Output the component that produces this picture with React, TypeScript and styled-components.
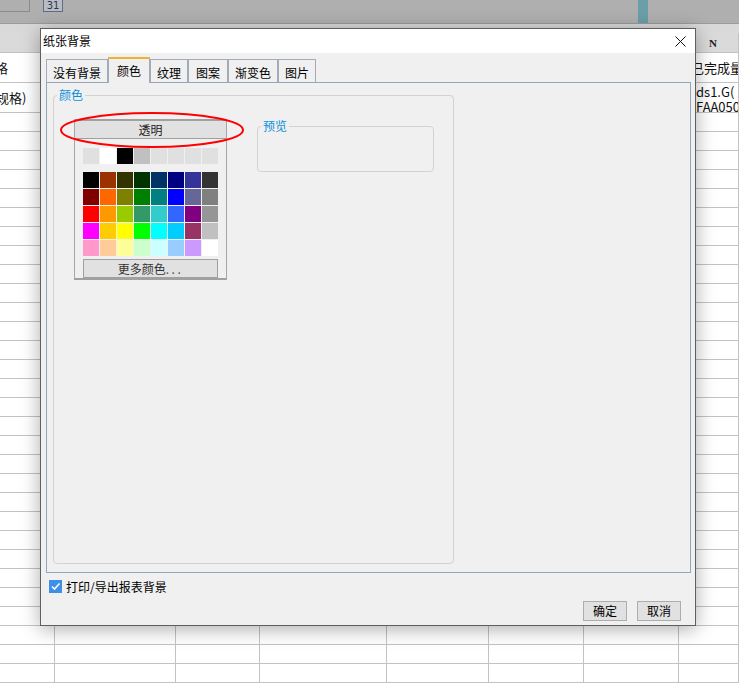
import React from "react";
import styled, { createGlobalStyle } from "styled-components";

const GlobalStyle = createGlobalStyle`
  html, body { margin: 0; padding: 0; background: #fff; overflow: hidden; }
  body { font-family: "Noto Sans CJK SC", "Noto Sans", sans-serif; }
  * { box-sizing: border-box; }
`;

const CJK = `"Noto Sans CJK SC", "Noto Sans", sans-serif`;

const Screen = styled.div`
  position: relative;
  width: 739px;
  height: 684px;
  overflow: hidden;
  background: #fff;
`;

/* ---------- background spreadsheet ---------- */
const Toolbar = styled.div`
  height: 24px;
  background: #afafaf;
  border-bottom: 1px solid #9b9b9b;
  display: flex;
  align-items: flex-start;
`;

const InputStub = styled.div`
  width: 30px;
  height: 12px;
  border-right: 1px solid #8c8c8c;
  border-bottom: 1px solid #8c8c8c;
`;

const DateButton = styled.div`
  margin-left: 13px;
  width: 20px;
  height: 12px;
  border: 1px solid #5c6d88;
  border-top: none;
  background: #b9bcc3;
  font: 10px/11px "DejaVu Sans", sans-serif;
  color: #2b3550;
  text-align: center;
`;

const Spacer = styled.div`
  flex: 1;
`;

const TealBar = styled.div`
  width: 10px;
  height: 23px;
  margin-right: 91px;
  background: #6a9ea9;
`;

const Band = styled.div`
  height: 9px;
  background: #d9d9d9;
`;

const Sheet = styled.div`
  display: grid;
  grid-template-columns: 55px 121px 84px 127px 102px 95px 95px 1fr;
`;

const Cell = styled.div<{ $h: number; $head?: boolean }>`
  height: ${(p) => p.$h}px;
  border-right: 1px solid #c3c3c3;
  border-bottom: 1px solid #c3c3c3;
  background: ${(p) => (p.$head ? "#dadada" : "#fff")};
  font: 13px/15px ${CJK};
  color: #111;
  overflow: hidden;
  white-space: nowrap;
  display: flex;
  flex-direction: column;
  justify-content: center;
`;

const ClipText = styled.span<{ $shift: number }>`
  margin-left: ${(p) => p.$shift}px;
`;

const HeadLetter = styled.span`
  font: bold 11px "Liberation Serif", serif;
  padding-left: 30px;
  color: #222;
`;

const TwoLine = styled.div`
  padding: 1px 0 0 17px;
  font: 13px/15px ${CJK};
  align-self: stretch;
  margin-top: auto;
  height: 29px;
  overflow: hidden;
`;

/* ---------- dialog ---------- */
const Dialog = styled.div`
  position: absolute;
  left: 40px;
  top: 28px;
  width: 656px;
  height: 598px;
  border: 1px solid #5f5f5f;
  background: #f0f0f0;
  box-shadow: 0 3px 18px rgba(0, 0, 0, 0.33);
  display: flex;
  flex-direction: column;
`;

const TitleBar = styled.div`
  height: 24px;
  background: #fff;
  display: flex;
  align-items: center;
  justify-content: space-between;
  padding: 0 9px 0 2px;
  font: 12px/14px ${CJK};
  color: #000;
`;

const Body = styled.div`
  flex: 1;
  padding: 6px 5px 0 5px;
  display: flex;
  flex-direction: column;
`;

const TabRow = styled.div`
  display: flex;
  height: 24px;
  position: relative;
  z-index: 2;
`;

const Tab = styled.div<{ $w: number; $active?: boolean }>`
  width: ${(p) => p.$w}px;
  height: ${(p) => (p.$active ? 26 : 24)}px;
  margin-top: ${(p) => (p.$active ? -2 : 0)}px;
  border: 1px solid #a3abb9;
  border-bottom: ${(p) => (p.$active ? "none" : "1px solid #98a4bb")};
  border-top: ${(p) => (p.$active ? "2px solid #f0b233" : "1px solid #a3abb9")};
  background: #f0f0f0;
  font: 12px/14px ${CJK};
  color: #000;
  display: flex;
  justify-content: center;
  align-items: center;
  padding-top: ${(p) => (p.$active ? 0 : 3)}px;
`;

const Panel = styled.div`
  margin-top: -1px;
  height: 491px;
  width: 645px;
  border: 1px solid #98a4bb;
  background: #f0f0f0;
  padding: 6px 0 0 6px;
`;

const Group = styled.fieldset<{ $w: number; $h: number }>`
  margin: 0;
  padding: 0;
  width: ${(p) => p.$w}px;
  height: ${(p) => p.$h}px;
  border: 1px solid #d2d2d2;
  border-radius: 4px;
`;

const Legend = styled.legend`
  margin-left: 3px;
  padding: 0 2px;
  font: 12px/12px ${CJK};
  color: #0c8fd9;
`;

const GroupContent = styled.div`
  display: flex;
  align-items: flex-start;
  gap: 30px;
  padding: 18px 0 0 20px;
`;

const PopupWrap = styled.div`
  position: relative;
  width: 153px;
`;

const Popup = styled.div`
  width: 153px;
  border-left: 1px solid #a6a6a6;
  border-right: 1px solid #a6a6a6;
  border-bottom: 2px solid #a0a0a0;
  display: flex;
  flex-direction: column;
`;

const ClearButton = styled.div`
  height: 20px;
  border-top: 2px solid #a0a0a0;
  border-bottom: 1px solid #a0a0a0;
  background: #e1e1e1;
  font: 12px/17px ${CJK};
  color: #222;
  text-align: center;
`;

const SwatchArea = styled.div`
  padding: 9px 0 0 8px;
  display: flex;
  flex-direction: column;
`;

const SwatchGrid = styled.div<{ $mt: number }>`
  margin-top: ${(p) => p.$mt}px;
  display: grid;
  grid-template-columns: repeat(8, 16px);
  grid-auto-rows: 16px;
  gap: 1px;
`;

const Swatch = styled.div<{ $c: string }>`
  background: ${(p) => p.$c};
`;

const MoreButton = styled.div`
  margin-top: 3px;
  width: 135px;
  height: 19px;
  border: 1px solid #a0a0a0;
  background: #e1e1e1;
  font: 12px/17px ${CJK};
  color: #333;
  text-align: center;
`;

const Dots = styled.span`
  letter-spacing: 2.5px;
  color: #555;
`;

const Annotation = styled.svg`
  position: absolute;
  left: -14px;
  top: -7px;
  pointer-events: none;
`;

const PreviewGroup = styled(Group)`
  margin-top: 1px;
`;

const CheckRow = styled.label`
  margin: 7px 0 0 3px;
  display: flex;
  align-items: center;
  gap: 4px;
  height: 13px;
  font: 12px/14px ${CJK};
  color: #000;
`;

const CheckBox = styled.span`
  width: 13px;
  height: 13px;
  background: #3d8fe8;
  display: flex;
  align-items: center;
  justify-content: center;
`;

const ButtonRow = styled.div`
  margin-top: 8px;
  display: flex;
  justify-content: flex-end;
  gap: 10px;
  padding-right: 9px;
`;

const DlgButton = styled.div`
  width: 44px;
  height: 20px;
  border: 1px solid #adadad;
  background: #e1e1e1;
  font: 12px/18px ${CJK};
  color: #000;
  text-align: center;
`;

const palette = [
  ["#000000", "#993300", "#333300", "#003300", "#003366", "#000080", "#333399", "#333333"],
  ["#800000", "#FF6600", "#808000", "#008000", "#008080", "#0000FF", "#666699", "#808080"],
  ["#FF0000", "#FF9900", "#99CC00", "#339966", "#33CCCC", "#3366FF", "#800080", "#969696"],
  ["#FF00FF", "#FFCC00", "#FFFF00", "#00FF00", "#00FFFF", "#00CCFF", "#993366", "#C0C0C0"],
  ["#FF99CC", "#FFCC99", "#FFFF99", "#CCFFCC", "#CCFFFF", "#99CCFF", "#CC99FF", "#FFFFFF"],
];
const recent = ["#e0e0e0", "#ffffff", "#000000", "#c0c0c0", "#e0e0e0", "#e0e0e0", "#e0e0e0", "#e0e0e0"];

const tabs: { label: string; w: number; active?: boolean }[] = [
  { label: "没有背景", w: 62 },
  { label: "颜色", w: 42, active: true },
  { label: "纹理", w: 38 },
  { label: "图案", w: 40 },
  { label: "渐变色", w: 50 },
  { label: "图片", w: 38 },
];

const COLS = 8;

function SheetRow({ h, head, children }: { h: number; head?: boolean; children?: React.ReactNode[] }) {
  const cells = [];
  for (let i = 0; i < COLS; i++) {
    cells.push(
      <Cell key={i} $h={h} $head={head}>
        {children ? children[i] : null}
      </Cell>
    );
  }
  return <>{cells}</>;
}

export default function App() {
  const empties = Array.from({ length: 30 });
  return (
    <Screen>
      <GlobalStyle />
      <Toolbar>
        <InputStub />
        <DateButton>31</DateButton>
        <Spacer />
        <TealBar />
      </Toolbar>
      <Band />
      <Sheet>
        <SheetRow h={20} head>
          {[null, null, null, null, null, null, null, <HeadLetter key="n">N</HeadLetter>]}
        </SheetRow>
        <SheetRow h={30}>
          {[
            <ClipText key="a" $shift={-5}>格</ClipText>,
            null, null, null, null, null, null,
            <ClipText key="b" $shift={12}>已完成量</ClipText>,
          ]}
        </SheetRow>
        <SheetRow h={30}>
          {[
            <ClipText key="a" $shift={-4}>规格)</ClipText>,
            null, null, null, null, null, null,
            <TwoLine key="b">
              ds1.G(
              <br />
              FAA050
            </TwoLine>,
          ]}
        </SheetRow>
        {empties.map((_, i) => (
          <SheetRow key={i} h={19} />
        ))}
      </Sheet>

      <Dialog>
        <TitleBar>
          <span>纸张背景</span>
          <svg width="11" height="11" viewBox="0 0 11 11">
            <path d="M0.5 0.5 L10.5 10.5 M10.5 0.5 L0.5 10.5" stroke="#111" strokeWidth="1" fill="none" />
          </svg>
        </TitleBar>
        <Body>
          <TabRow>
            {tabs.map((t) => (
              <Tab key={t.label} $w={t.w} $active={t.active}>
                {t.label}
              </Tab>
            ))}
          </TabRow>
          <Panel>
            <Group $w={401} $h={475}>
              <Legend>颜色</Legend>
              <GroupContent>
                <PopupWrap>
                  <Popup>
                    <ClearButton>透明</ClearButton>
                    <SwatchArea>
                      <SwatchGrid $mt={0}>
                        {recent.map((c, i) => (
                          <Swatch key={i} $c={c} />
                        ))}
                      </SwatchGrid>
                      <SwatchGrid $mt={8}>
                        {palette.flat().map((c, i) => (
                          <Swatch key={i} $c={c} />
                        ))}
                      </SwatchGrid>
                      <MoreButton>
                        更多颜色<Dots>...</Dots>
                      </MoreButton>
                    </SwatchArea>
                  </Popup>
                  <Annotation width="184" height="36" viewBox="0 0 184 36">
                    <ellipse cx="92" cy="18" rx="91" ry="17" fill="none" stroke="#ff0000" strokeWidth="2" />
                  </Annotation>
                </PopupWrap>
                <PreviewGroup $w={177} $h={52}>
                  <Legend>预览</Legend>
                </PreviewGroup>
              </GroupContent>
            </Group>
          </Panel>
          <CheckRow>
            <CheckBox>
              <svg width="11" height="11" viewBox="0 0 11 11">
                <path d="M2 5.5 L4.5 8 L9.5 2.5" stroke="#fff" strokeWidth="1.6" fill="none" />
              </svg>
            </CheckBox>
            打印/导出报表背景
          </CheckRow>
          <ButtonRow>
            <DlgButton>确定</DlgButton>
            <DlgButton>取消</DlgButton>
          </ButtonRow>
        </Body>
      </Dialog>
    </Screen>
  );
}
